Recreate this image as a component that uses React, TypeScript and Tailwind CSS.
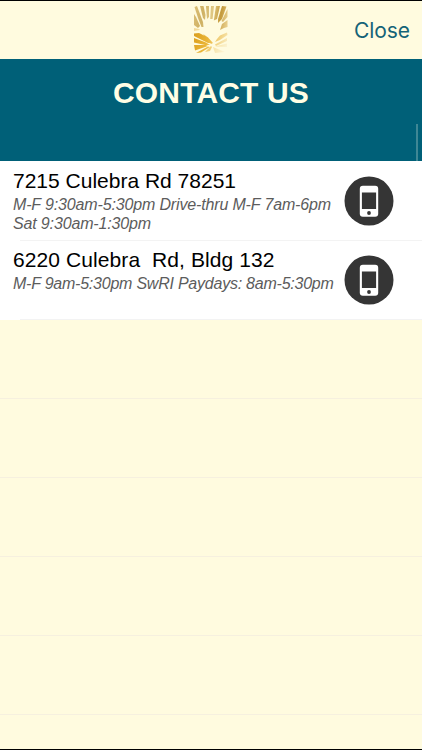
import React from 'react';

interface Branch {
  id: number;
  address: string;
  hours: string[];
  titleTracking: string;
  hoursTracking: string;
}

const branches: Branch[] = [
  {
    id: 1,
    address: '7215 Culebra Rd 78251',
    hours: ['M-F 9:30am-5:30pm Drive-thru M-F 7am-6pm', 'Sat 9:30am-1:30pm'],
    titleTracking: 'tracking-normal',
    hoursTracking: 'tracking-[-0.15px]',
  },
  {
    id: 2,
    address: '6220 Culebra  Rd, Bldg 132',
    hours: ['M-F 9am-5:30pm SwRI Paydays: 8am-5:30pm'],
    titleTracking: 'tracking-[0.09px]',
    hoursTracking: 'tracking-[-0.23px]',
  },
];

const emptyRows = [1, 2, 3, 4, 5];

const HandLogo: React.FC = () => (
  <svg width="36" height="50" viewBox="0 0 36 50">
    <defs>
      <linearGradient id="gold-top" gradientUnits="userSpaceOnUse" x1="0" y1="0" x2="36" y2="6">
        <stop offset="0" stopColor="#dcc078" />
        <stop offset="0.3" stopColor="#cfb163" />
        <stop offset="0.55" stopColor="#e0c884" />
        <stop offset="0.8" stopColor="#c49a3b" />
        <stop offset="1" stopColor="#e3c478" />
      </linearGradient>
      <linearGradient id="gold-bottom" gradientUnits="userSpaceOnUse" x1="0" y1="26" x2="34" y2="42">
        <stop offset="0" stopColor="#d89c1c" />
        <stop offset="0.45" stopColor="#eab536" />
        <stop offset="0.75" stopColor="#f2d486" />
        <stop offset="1" stopColor="#fbf0cb" />
      </linearGradient>
      <filter id="soft" x="-5%" y="-5%" width="110%" height="110%">
        <feGaussianBlur stdDeviation="0.6" />
      </filter>
    </defs>
    <g filter="url(#soft)">
      {/* Rays above the hand */}
      <g fill="url(#gold-top)">
        <path d="M1.5 2 L4 1 L10 17 L10.5 22 L8.5 22 L5 13Z" />
        <path d="M1 9 L3 12 L7 21 L5 23 L1 20Z" />
        <path d="M7 1 L10.5 1 L12.5 10 L12 15 L10 13Z" />
        <path d="M13 1 L16 1 L16 12 L14 14Z" />
        <path d="M18 1 L21 1 L19.5 14 L17.2 14Z" />
        <path d="M23 1 L27 1 L24 14 L20.8 15.5Z" />
        <path d="M29 1 L33.5 1.5 L29 14 L25 18 L25 14Z" />
        <path d="M34.5 4 L34.5 12 L30 17 L28.5 16Z" opacity="0.8" />
        <path d="M34.5 15 L34.5 22 L31 23 L27 25 L29 19Z" opacity="0.85" />
      </g>
      {/* Rays below the palm */}
      <g fill="url(#gold-bottom)">
        <path d="M1 23 L6 24 L7 25 L1 26Z" opacity="0.35" />
        <path d="M1 28.5 L6 28 L12 31 L18 38 L15 38 L1 31Z" />
        <path d="M1 33 L13 37.5 L17 40 L12 40 L1 37.5Z" />
        <path d="M1 40 L13 40 L15 41 L2 45.5Z" />
        <path d="M3 48 L15 41.5 L17 42 L8 47.5Z" />
        <path d="M12 47 L18 41 L19 42 L17 46Z" opacity="0.8" />
        <path d="M10 29 L15 32.5 L20 38 L18 39Z" />
        <path d="M24 34 L27 30.5 L34 27.5 L34.5 30 L27 35 L22 37Z" />
        <path d="M22 39.5 L34 33 L34 36 L23 41Z" opacity="0.9" />
        <path d="M22 41.5 L34 38.5 L34 42Z" opacity="0.6" />
        <path d="M20 42 L32 47 L22 48Z" opacity="0.5" />
      </g>
    </g>
  </svg>
);

const PhoneIcon: React.FC = () => (
  <svg width="50" height="50" viewBox="0 0 50 50">
    <circle cx="25" cy="25" r="24.5" fill="#353535" />
    <rect x="15.8" y="9.8" width="18.4" height="31" rx="3" fill="#ffffff" />
    <rect x="17.9" y="16.5" width="14.2" height="16.5" fill="#353535" />
    <circle cx="25" cy="37" r="1.9" fill="#353535" />
  </svg>
);

export default function App() {
  return (
    <div className="flex h-screen w-full flex-col overflow-hidden border-y border-black bg-[#fffbdf] font-['Liberation_Sans',Arial,sans-serif]">
      <header className="grid h-[58px] shrink-0 grid-cols-3 items-center">
        <div className="col-start-2 flex justify-center">
          <HandLogo />
        </div>
        <button className="justify-self-end pr-3 pt-0.5 font-['Inter',sans-serif] text-[21px] leading-6 tracking-[-0.05px] text-[#146378]">
          Close
        </button>
      </header>

      <section className="flex h-[102px] shrink-0 flex-col bg-[#006078]">
        <h1 className="pt-[17px] text-center text-[30px] font-bold leading-[34px] tracking-[0.15px] text-[#fffee5]">
          CONTACT US
        </h1>
        {/* Scroll indicator */}
        <div className="mr-1 mt-auto h-[37px] w-0.5 self-end bg-[#3f8795]" />
      </section>

      <ul className="shrink-0 bg-white pt-px">
        {branches.map((branch) => (
          <li key={branch.id} className="flex h-[79px] flex-col">
            <div className="flex flex-1 items-start justify-between pl-[13px] pr-7">
              <div className="whitespace-pre pt-[7px]">
                <h2 className={`pb-0.5 text-[21px] leading-6 text-black ${branch.titleTracking}`}>
                  {branch.address}
                </h2>
                {branch.hours.map((line) => (
                  <p
                    key={line}
                    className={`text-base italic leading-[19px] text-[#5c5c5c] ${branch.hoursTracking}`}
                  >
                    {line}
                  </p>
                ))}
              </div>
              <div className="pt-3.5">
                <PhoneIcon />
              </div>
            </div>
            <div className="ml-5 h-px shrink-0 bg-[#f3f3f3]" />
          </li>
        ))}
      </ul>

      <ul>
        {emptyRows.map((row) => (
          <li key={row} className="h-[79px] border-b border-[#f6f0df]" />
        ))}
      </ul>
    </div>
  );
}
